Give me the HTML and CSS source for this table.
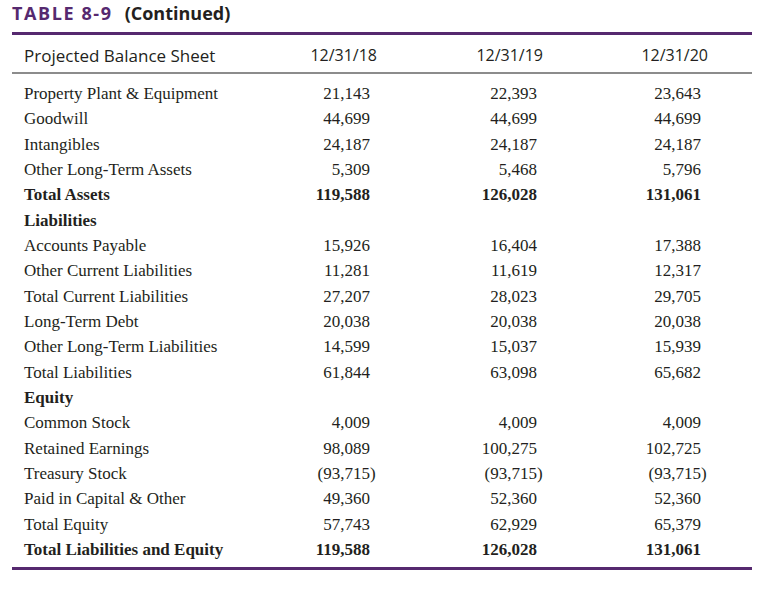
FILE: index.html
```html
<!DOCTYPE html>
<html>
<head>
<meta charset="utf-8">
<link rel="stylesheet" href="styles.css">
</head>
<body>
<div class="page">
  <h1 class="title"><span class="tnum">TABLE 8-9</span><span class="cont">(Continued)</span></h1>
  <table class="sheet">
    <colgroup>
      <col class="w1"><col class="w2"><col class="w3"><col class="w4">
    </colgroup>
    <thead>
      <tr>
        <th class="lab">Projected Balance Sheet</th>
        <th class="c2">12/31/18</th>
        <th class="c3">12/31/19</th>
        <th class="c4">12/31/20</th>
      </tr>
    </thead>
    <tbody>
      <tr class="first"><td class="lab">Property Plant &amp; Equipment</td><td class="c2">21,143</td><td class="c3">22,393</td><td class="c4">23,643</td></tr>
      <tr><td class="lab">Goodwill</td><td class="c2">44,699</td><td class="c3">44,699</td><td class="c4">44,699</td></tr>
      <tr><td class="lab">Intangibles</td><td class="c2">24,187</td><td class="c3">24,187</td><td class="c4">24,187</td></tr>
      <tr><td class="lab">Other Long-Term Assets</td><td class="c2">5,309</td><td class="c3">5,468</td><td class="c4">5,796</td></tr>
      <tr class="bold"><td class="lab">Total Assets</td><td class="c2">119,588</td><td class="c3">126,028</td><td class="c4">131,061</td></tr>
      <tr class="bold"><td class="lab">Liabilities</td><td class="c2"></td><td class="c3"></td><td class="c4"></td></tr>
      <tr><td class="lab">Accounts Payable</td><td class="c2">15,926</td><td class="c3">16,404</td><td class="c4">17,388</td></tr>
      <tr><td class="lab">Other Current Liabilities</td><td class="c2">11,281</td><td class="c3">11,619</td><td class="c4">12,317</td></tr>
      <tr><td class="lab">Total Current Liabilities</td><td class="c2">27,207</td><td class="c3">28,023</td><td class="c4">29,705</td></tr>
      <tr><td class="lab">Long-Term Debt</td><td class="c2">20,038</td><td class="c3">20,038</td><td class="c4">20,038</td></tr>
      <tr><td class="lab">Other Long-Term Liabilities</td><td class="c2">14,599</td><td class="c3">15,037</td><td class="c4">15,939</td></tr>
      <tr><td class="lab">Total Liabilities</td><td class="c2">61,844</td><td class="c3">63,098</td><td class="c4">65,682</td></tr>
      <tr class="bold"><td class="lab">Equity</td><td class="c2"></td><td class="c3"></td><td class="c4"></td></tr>
      <tr><td class="lab">Common Stock</td><td class="c2">4,009</td><td class="c3">4,009</td><td class="c4">4,009</td></tr>
      <tr><td class="lab">Retained Earnings</td><td class="c2">98,089</td><td class="c3">100,275</td><td class="c4">102,725</td></tr>
      <tr><td class="lab">Treasury Stock</td><td class="c2"><span class="neg">(93,715)</span></td><td class="c3"><span class="neg">(93,715)</span></td><td class="c4"><span class="neg">(93,715)</span></td></tr>
      <tr><td class="lab">Paid in Capital &amp; Other</td><td class="c2">49,360</td><td class="c3">52,360</td><td class="c4">52,360</td></tr>
      <tr><td class="lab">Total Equity</td><td class="c2">57,743</td><td class="c3">62,929</td><td class="c4">65,379</td></tr>
      <tr class="bold last"><td class="lab">Total Liabilities and Equity</td><td class="c2">119,588</td><td class="c3">126,028</td><td class="c4">131,061</td></tr>
    </tbody>
  </table>
</div>
</body>
</html>
```

FILE: styles.css
```css
html, body {
  margin: 0;
  padding: 0;
  background: #ffffff;
}

.page {
  padding: 3px 0 0 12px;
  width: 740px;
}

.title {
  margin: 0;
  font-family: "Open Sans", "Liberation Sans", sans-serif;
  font-weight: 700;
  font-size: 18px;
  line-height: 21px;
  color: #231f20;
  white-space: nowrap;
}

.tnum {
  color: #56296f;
  letter-spacing: 1.6px;
}

.cont {
  margin-left: 12px;
}

.sheet {
  margin-top: 8px;
  width: 740px;
  border-collapse: collapse;
  border-top: 3px solid #56296f;
  border-bottom: 3px solid #56296f;
  table-layout: fixed;
  color: #231f20;
}

.w1 { width: 250px; }
.w2 { width: 166px; }
.w3 { width: 166px; }
.w4 { width: 158px; }

.sheet th,
.sheet td {
  box-sizing: border-box;
}

.sheet th {
  font-family: "Open Sans", "Liberation Sans", sans-serif;
  font-weight: 400;
  font-size: 16px;
  line-height: 33px;
  padding: 4px 0 0 0;
  border-bottom: 2px solid #8c8c8c;
  text-align: right;
  white-space: nowrap;
}

.sheet th.lab {
  font-size: 17px;
}

.sheet td {
  font-family: "Liberation Serif", "Times New Roman", serif;
  font-size: 17px;
  line-height: 25.33px;
  height: 25.33px;
  padding: 0;
  text-align: right;
  white-space: nowrap;
}

.sheet .lab {
  padding-left: 12px;
  text-align: left;
}

.sheet th.c2 { padding-right: 51px; }
.sheet th.c3 { padding-right: 51px; }
.sheet th.c4 { padding-right: 44px; }

.sheet td.c2 { padding-right: 58px; }
.sheet td.c3 { padding-right: 57px; }
.sheet td.c4 { padding-right: 51px; }

.sheet tr.first td {
  padding-top: 7px;
  height: 32.33px;
}

.sheet tr.last td {
  padding-bottom: 5px;
  height: 30.33px;
}

.sheet tr.bold td {
  font-weight: 700;
}

.neg {
  margin-right: -0.333em;
}
```
